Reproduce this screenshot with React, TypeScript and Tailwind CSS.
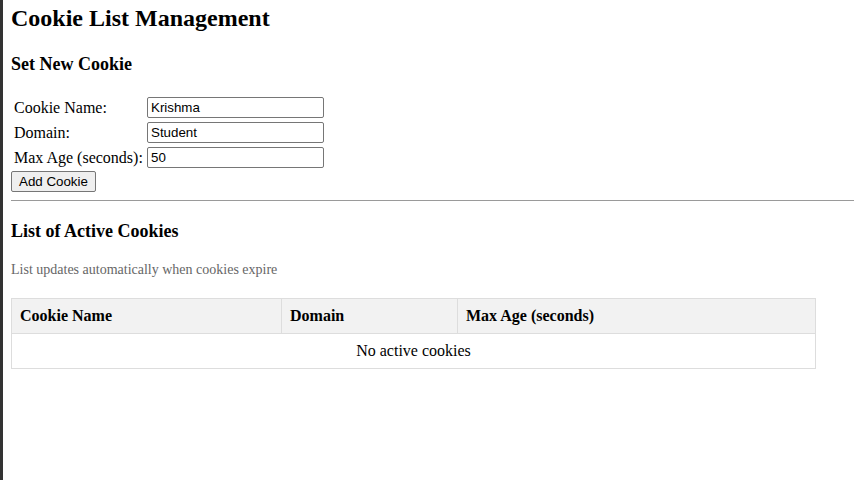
import React from "react";

const fields = [
  { label: "Cookie Name:", value: "Krishma" },
  { label: "Domain:", value: "Student" },
  { label: "Max Age (seconds):", value: "50" },
];

export default function App() {
  return (
    <div className="flex min-h-screen bg-white text-black font-['Liberation_Serif','Times_New_Roman',serif]">
      <div className="w-[3px] shrink-0 bg-[#333333]" />
      <main className="flex-1 pl-2 pt-1">
        <h1 className="text-[24px] font-bold leading-[28px]">Cookie List Management</h1>

        <h3 className="mt-[22px] text-[18px] font-bold leading-[21px]">Set New Cookie</h3>

        <div className="mt-[22px] grid grid-cols-[133px_177px] gap-y-[4px] pl-[3px]">
          {fields.map((f) => (
            <React.Fragment key={f.label}>
              <label className="text-[16px] leading-[21px]">{f.label}</label>
              <input
                readOnly
                value={f.value}
                className="h-[21px] w-[177px] rounded-[2px] border border-[#767676] px-[3px] text-[13.33px] font-['Liberation_Sans',Arial,sans-serif] outline-none"
              />
            </React.Fragment>
          ))}
        </div>

        <button className="mt-[3px] h-[21px] rounded-[2px] border border-[#767676] bg-[#efefef] px-[7px] text-[13.33px] leading-[17px] font-['Liberation_Sans',Arial,sans-serif]">
          Add Cookie
        </button>

        <hr className="mt-[7px] border-t border-[#9a9a9a]" />

        <h3 className="mt-[20px] text-[18px] font-bold leading-[21px]">List of Active Cookies</h3>

        <p className="mt-[20px] text-[14px] leading-[16px] text-[#666666]">
          List updates automatically when cookies expire
        </p>

        <table className="mt-[20px] w-[805px] border-collapse text-[16px]">
          <thead>
            <tr className="bg-[#f2f2f2]">
              <th className="w-[270px] border border-[#dddddd] p-2 text-left leading-[18px]">Cookie Name</th>
              <th className="w-[176px] border border-[#dddddd] p-2 text-left leading-[18px]">Domain</th>
              <th className="border border-[#dddddd] p-2 text-left leading-[18px]">Max Age (seconds)</th>
            </tr>
          </thead>
          <tbody>
            <tr>
              <td colSpan={3} className="border border-[#dddddd] p-2 text-center leading-[18px]">
                No active cookies
              </td>
            </tr>
          </tbody>
        </table>
      </main>
    </div>
  );
}
